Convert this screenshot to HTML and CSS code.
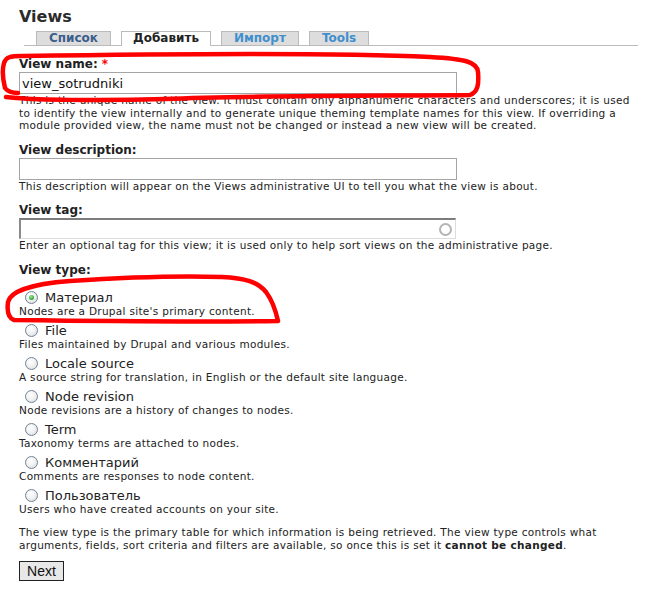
FILE: index.html
```html
<!DOCTYPE html>
<html lang="ru">
<head>
<meta charset="utf-8">
<title>Views</title>
<link rel="stylesheet" href="styles.css">
</head>
<body>
<div class="page">
  <h1 class="title">Views</h1>
  <ul class="tabs">
    <li><a class="tab visited" href="#">Список</a></li>
    <li><a class="tab active" href="#">Добавить</a></li>
    <li><a class="tab" href="#">Импорт</a></li>
    <li><a class="tab" href="#">Tools</a></li>
  </ul>
  <form class="form">
    <div class="item">
      <label class="label">View name: <span class="req">*</span></label>
      <input class="text" type="text" value="view_sotrudniki">
      <div class="desc">This is the unique name of the view. It must contain only alphanumeric characters and underscores; it is used to identify the view internally and to generate unique theming template names for this view. If overriding a module provided view, the name must not be changed or instead a new view will be created.</div>
    </div>
    <div class="item">
      <label class="label">View description:</label>
      <input class="text" type="text" value="">
      <div class="desc">This description will appear on the Views administrative UI to tell you what the view is about.</div>
    </div>
    <div class="item">
      <label class="label">View tag:</label>
      <div class="auto">
        <input class="text tag" type="text" value="">
        <span class="throbber"></span>
      </div>
      <div class="desc">Enter an optional tag for this view; it is used only to help sort views on the administrative page.</div>
    </div>
    <div class="item">
      <label class="label">View type:</label>
      <div class="radios">
        <div class="radio">
          <label class="option"><input type="radio" name="type" checked> Материал</label>
          <div class="desc">Nodes are a Drupal site's primary content.</div>
        </div>
        <div class="radio">
          <label class="option"><input type="radio" name="type"> File</label>
          <div class="desc">Files maintained by Drupal and various modules.</div>
        </div>
        <div class="radio">
          <label class="option"><input type="radio" name="type"> Locale source</label>
          <div class="desc">A source string for translation, in English or the default site language.</div>
        </div>
        <div class="radio">
          <label class="option"><input type="radio" name="type"> Node revision</label>
          <div class="desc">Node revisions are a history of changes to nodes.</div>
        </div>
        <div class="radio">
          <label class="option"><input type="radio" name="type"> Term</label>
          <div class="desc">Taxonomy terms are attached to nodes.</div>
        </div>
        <div class="radio">
          <label class="option"><input type="radio" name="type"> Комментарий</label>
          <div class="desc">Comments are responses to node content.</div>
        </div>
        <div class="radio">
          <label class="option"><input type="radio" name="type"> Пользователь</label>
          <div class="desc">Users who have created accounts on your site.</div>
        </div>
      </div>
    </div>
    <p class="note">The view type is the primary table for which information is being retrieved. The view type controls what arguments, fields, sort criteria and filters are available, so once this is set it <strong>cannot be changed</strong>.</p>
    <button class="next" type="button">Next</button>
  </form>
  <svg class="marks" width="668" height="616" viewBox="0 0 668 616">
    <path d="M18 93 C12 93 8 92 5 88 C3 80 2 70 4 63 C6 57 10 56 22 56 C150 54 330 52 430 57 C466 59 477 62 478 72 C479 84 478 92 470 95 C420 96 250 95 165 99 C100 101 30 100 6 97"/>
    <path d="M14 320 C8 318 7 310 8 302 C10 292 30 284 70 281 C130 277 190 276 222 277 C245 278 258 282 266 292 C272 300 276 312 278 321 C200 322 90 321 14 320"/>
  </svg>
</div>
</body>
</html>
```

FILE: styles.css
```css
html, body {
  margin: 0;
  padding: 0;
  background: #fff;
}

.page {
  position: relative;
  width: 619px;
  padding: 6px 30px 0 19px;
  font-family: "DejaVu Sans", Verdana, sans-serif;
  color: #222;
}

.title {
  margin: 0;
  font-size: 16px;
  line-height: 21px;
  font-weight: bold;
  color: #2b2b2b;
}

.tabs {
  list-style: none;
  margin: 4px 0 0 5px;
  padding: 0 0 0 12px;
  display: flex;
  gap: 10px;
  border-bottom: 1px solid #bbb;
  height: 14px;
}

.tabs li {
  display: block;
}

.tab {
  display: block;
  height: 14px;
  box-sizing: border-box;
  padding: 0 12px;
  border: 1px solid #bbb;
  border-bottom: none;
  background: #ddd;
  font-size: 12px;
  line-height: 13px;
  font-weight: bold;
  color: #3f8fcd;
  text-decoration: none;
}

.tab.visited {
  color: #3b5d8c;
}

.tab.active {
  background: #fff;
  color: #222;
  height: 15px;
  padding: 0 11px;
}

.form {
  margin-top: 11px;
}

.item {
  margin-bottom: 11px;
}

.label {
  display: block;
  font-size: 12px;
  line-height: 15px;
  font-weight: bold;
  color: #222;
}

.req {
  color: #f00;
}

.text {
  display: block;
  box-sizing: border-box;
  width: 438px;
  height: 22px;
  margin: 0;
  padding: 0 2px;
  border: 1px solid #a5a5a5;
  font-family: "DejaVu Sans", Verdana, sans-serif;
  font-size: 13px;
  color: #111;
  background: #fff;
}

.auto {
  position: relative;
  width: 437px;
}

.text.tag {
  width: 437px;
  height: 21px;
  border-width: 2px 1px 1px 2px;
  border-color: #7c7c7c #dcdcdc #dcdcdc #8a8a8a;
  border-style: solid;
}

.throbber {
  position: absolute;
  right: 4px;
  top: 5px;
  width: 9px;
  height: 9px;
  border: 2px solid #b3b3b3;
  border-radius: 50%;
}

.desc {
  font-size: 10.5px;
  letter-spacing: 0.3px;
  line-height: 12.6px;
  color: #222;
}

.radios {
  padding-top: 13px;
}

.radio {
  margin-top: 6.4px;
}

.radio:first-child {
  margin-top: 0;
}

.option {
  display: flex;
  align-items: center;
  height: 14px;
  font-size: 13px;
  line-height: 14px;
  color: #222;
}

.option input {
  appearance: none;
  -webkit-appearance: none;
  box-sizing: border-box;
  width: 13px;
  height: 13px;
  margin: 0 7px 0 6px;
  border: 1px solid #6f8396;
  border-radius: 50%;
  background: radial-gradient(circle at 40% 35%, #fff 0, #f2f2f2 45%, #d6d6d6 100%);
  display: grid;
  place-items: center;
  flex: none;
}

.option input:checked::after {
  content: "";
  width: 5px;
  height: 5px;
  border-radius: 50%;
  background: radial-gradient(circle at 40% 35%, #9be59b 0, #2ea52e 70%, #1f7f1f 100%);
}

.note {
  margin: 11px 0 9px;
  font-size: 10.5px;
  letter-spacing: 0.3px;
  line-height: 12.6px;
  color: #222;
}

.note strong {
  font-weight: bold;
}

.next {
  display: block;
  box-sizing: border-box;
  width: 45px;
  height: 20px;
  padding: 0;
  margin: 0;
  border: 1px solid #222;
  background: #e8e8e8;
  font-family: "Liberation Sans", Arial, sans-serif;
  font-size: 14px;
  color: #111;
}

.marks {
  position: absolute;
  left: 0;
  top: 0;
  pointer-events: none;
  fill: none;
  stroke: #ff0000;
  stroke-width: 4.5px;
  stroke-linecap: round;
  stroke-linejoin: round;
  filter: blur(0.6px);
}
```
